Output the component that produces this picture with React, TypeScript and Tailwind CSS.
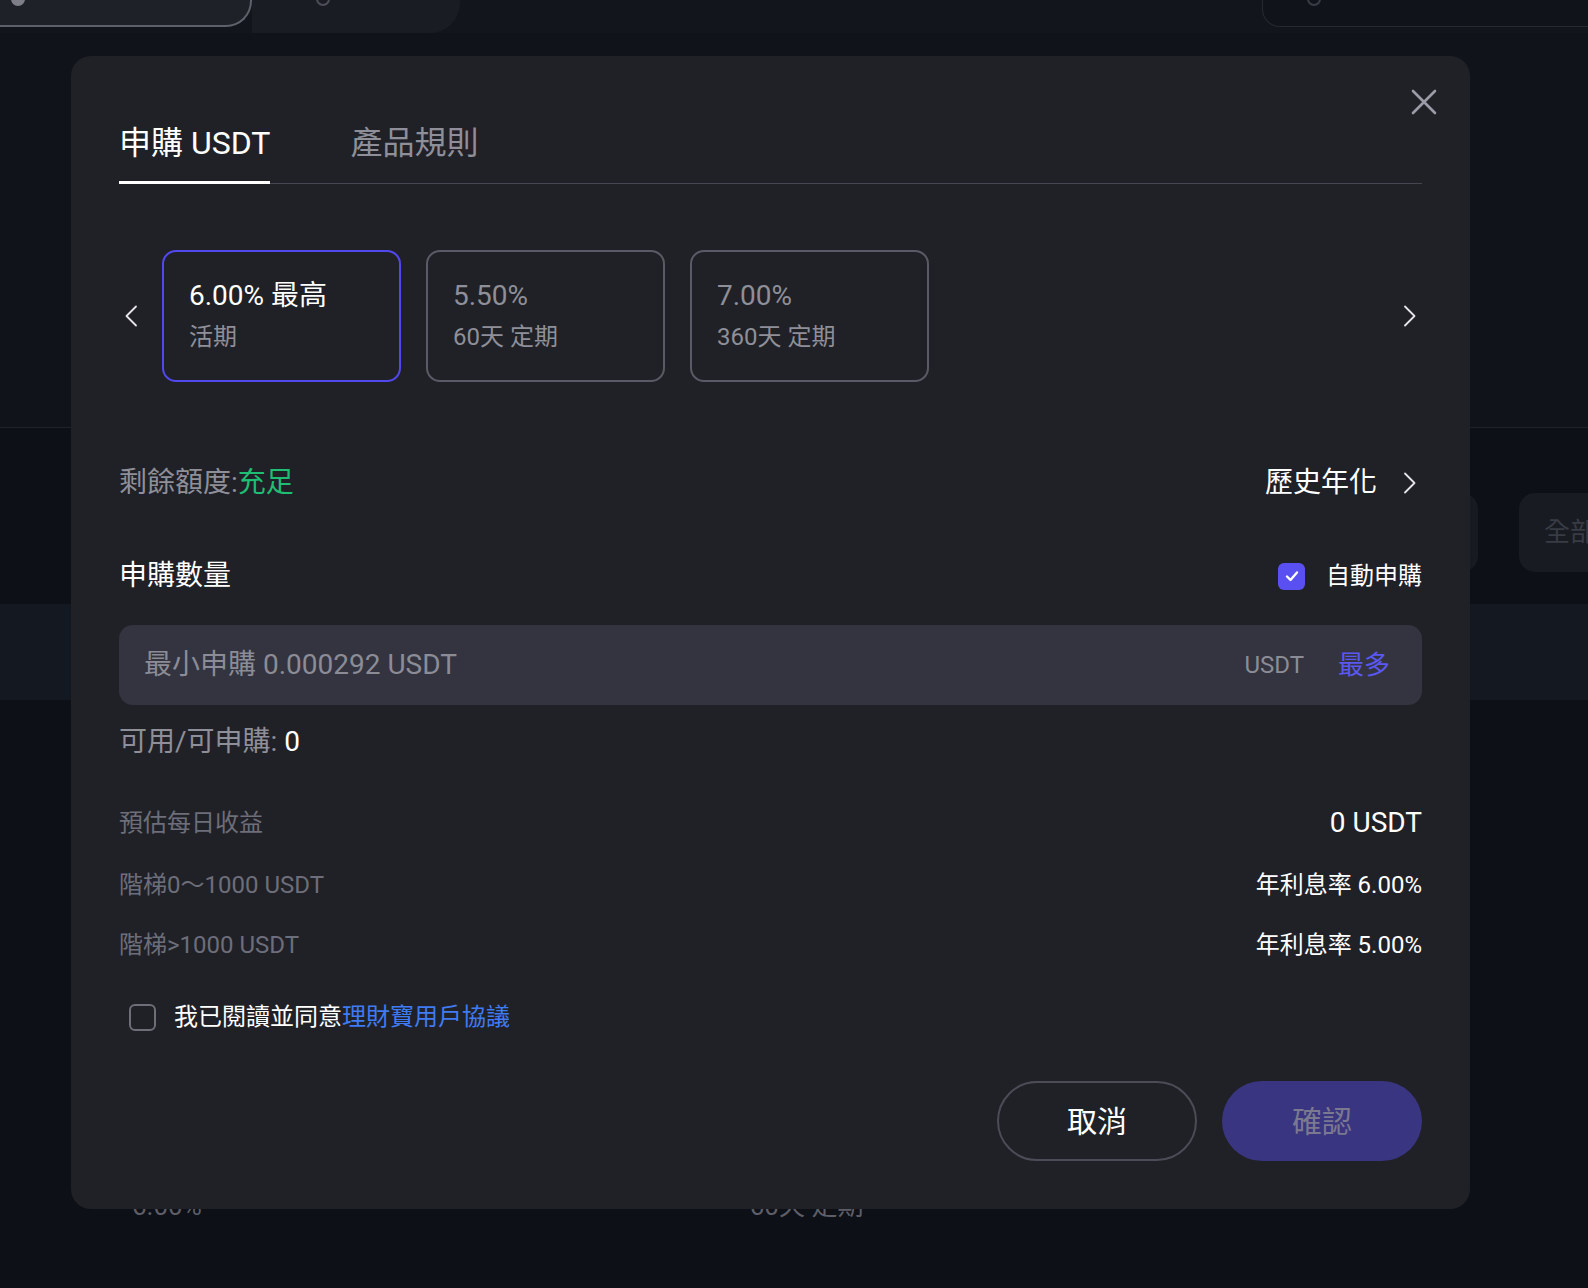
import { useState } from "react"

const FONT = "font-['Roboto','Noto_Sans_CJK_TC',sans-serif]"

/**
 * Savings products offered in the subscribe dialog.
 */
const PRODUCTS = [
  { id: "flexible", rate: "6.00%", tag: "最高", term: "活期" },
  { id: "fixed-60", rate: "5.50%", term: "60天 定期" },
  { id: "fixed-360", rate: "7.00%", term: "360天 定期" },
]

/**
 * Interest tiers shown under the estimate.
 */
const TIERS = [
  { label: "階梯0～1000 USDT", value: "年利息率 6.00%" },
  { label: "階梯>1000 USDT", value: "年利息率 5.00%" },
]

function ChevronLeft() {
  return (
    <svg width="14" height="22" viewBox="0 0 14 22" fill="none">
      <path d="M12 1.5 2.5 11l9.5 9.5" stroke="#e6e6ea" strokeWidth="1.8" strokeLinecap="round" strokeLinejoin="round" />
    </svg>
  )
}

function ChevronRight() {
  return (
    <svg width="14" height="22" viewBox="0 0 14 22" fill="none">
      <path d="M2 1.5 11.5 11 2 20.5" stroke="#e6e6ea" strokeWidth="1.8" strokeLinecap="round" strokeLinejoin="round" />
    </svg>
  )
}

function CloseIcon() {
  return (
    <svg width="26" height="26" viewBox="0 0 26 26" fill="none">
      <path d="M2 2 24 24M24 2 2 24" stroke="#9c9ca6" strokeWidth="2.6" strokeLinecap="round" />
    </svg>
  )
}

function CheckMark() {
  return (
    <svg width="16" height="16" viewBox="0 0 16 16" fill="none">
      <path d="M3 8.5 6.5 12 13 4.5" stroke="#fff" strokeWidth="2.4" strokeLinecap="round" strokeLinejoin="round" />
    </svg>
  )
}

/**
 * Dimmed page that sits behind the dialog.
 */
function BackgroundPage() {
  return (
    <div className="flex h-full flex-col bg-[#0d1016]">
      {/* Top bar with pill tabs */}
      <div className="flex h-[33px] items-start bg-[#12151c]">
        <div className="relative h-[27px] w-[252px] overflow-hidden rounded-br-[26px] border-b-2 border-r-2 border-[#5e606a] bg-[#1f2129]">
          <div className="ml-[11px] mt-[-8px] h-[14px] w-[14px] rounded-full bg-[#7d7e88]" />
        </div>
        <div className="h-[33px] w-[208px] overflow-hidden rounded-br-[30px] bg-[#1a1c23]">
          <div className="ml-[64px] mt-[-8px] h-[14px] w-[14px] rounded-full border-2 border-[#4c4d57]" />
        </div>
        <div className="flex-1" />
        <div className="h-[27px] w-[326px] overflow-hidden rounded-bl-[18px] border-b border-l border-[#262932] bg-[#10141a]">
          <div className="ml-[44px] mt-[-8px] h-[14px] w-[14px] rounded-full border-2 border-[#3a3c45]" />
        </div>
      </div>

      <div className="h-[394px] bg-[#10131a]" />
      <div className="h-px bg-[#1f222a]" />

      {/* Filter row, runs past the right edge of the window */}
      <div className="mt-[65px] flex h-[79px] justify-end">
        <div className="h-full w-[60px] rounded-[16px] bg-[#171a21]" />
        <div className="ml-[41px] flex h-full w-[69px] items-center overflow-hidden rounded-l-[16px] bg-[#181b22] pl-[25px] text-[26px] text-[#393b45]">
          <span className="whitespace-nowrap">全部</span>
        </div>
      </div>

      <div className="mt-[32px] h-[96px] bg-[#141820]" />

      {/* Product list row, mostly hidden by the dialog */}
      <div className="mt-[490px] flex text-[26px] leading-[32px] text-[#5d5e68]">
        <span className="ml-[132px]">6.00%</span>
        <span className="ml-[548px]">60天 定期</span>
      </div>
    </div>
  )
}

/**
 * Subscribe dialog with product picker, amount input and agreement.
 */
function SubscribeModal() {
  const [selected, setSelected] = useState("flexible")
  const [autoSubscribe, setAutoSubscribe] = useState(true)
  const [agreed, setAgreed] = useState(false)

  return (
    <div className="absolute inset-0">
      <div className="relative ml-[71px] mt-[56px] w-[1399px] rounded-[20px] bg-[#202127] px-12 pb-12 pt-[67px]">
        {/* Close button */}
        <button className="absolute right-[33px] top-[33px]" aria-label="Close">
          <CloseIcon />
        </button>

        {/* Tabs */}
        <div className="flex gap-[80px] border-b border-[#45464f] text-[32px] leading-[40px]">
          <div className="-mb-px border-b-[3px] border-white pb-[18px] text-white">申購 USDT</div>
          <div className="pb-[18px] text-[#8e8f99]">產品規則</div>
        </div>

        {/* Product picker */}
        <div className="mt-[66px] flex items-center">
          <button className="w-[43px] pl-[5px]">
            <ChevronLeft />
          </button>
          <div className="flex gap-[25px]">
            {PRODUCTS.map((p) => {
              const active = p.id === selected
              return (
                <button
                  key={p.id}
                  onClick={() => setSelected(p.id)}
                  className={
                    active
                      ? "flex h-[132px] w-[239px] flex-col justify-start rounded-[14px] border-2 border-[#5148ee] px-[25px] pt-[26px] text-left"
                      : "flex h-[132px] w-[239px] flex-col justify-start rounded-[14px] border-2 border-[#595a65] px-[25px] pt-[26px] text-left"
                  }
                >
                  <div className={active ? "text-[28px] leading-[36px] text-white" : "text-[28px] leading-[36px] text-[#8e8f99]"}>
                    {p.rate}
                    {p.tag && <span> {p.tag}</span>}
                  </div>
                  <div className="mt-[7px] text-[24px] leading-[32px] text-[#8e8f99]">{p.term}</div>
                </button>
              )
            })}
          </div>
          <div className="flex-1" />
          <button className="mr-[5px]">
            <ChevronRight />
          </button>
        </div>

        {/* Quota and history */}
        <div className="mt-[81px] flex items-center justify-between text-[28px] leading-[40px]">
          <div className="text-[#8e8f99]">
            剩餘額度:<span className="text-[#1fbf73]">充足</span>
          </div>
          <button className="flex items-center gap-[26px] text-white">
            歷史年化
            <span className="mr-[5px]">
              <ChevronRight />
            </span>
          </button>
        </div>

        {/* Amount header */}
        <div className="mt-[53px] flex items-center justify-between">
          <div className="text-[28px] leading-[40px] text-white">申購數量</div>
          <label className="flex items-center gap-[21px] text-[24px] leading-[40px] text-white">
            <button
              onClick={() => setAutoSubscribe(!autoSubscribe)}
              className={
                autoSubscribe
                  ? "flex h-[27px] w-[27px] items-center justify-center rounded-[6px] bg-[#5a50f2]"
                  : "h-[27px] w-[27px] rounded-[6px] border-2 border-[#6d6e78]"
              }
            >
              {autoSubscribe && <CheckMark />}
            </button>
            自動申購
          </label>
        </div>

        {/* Amount input */}
        <div className="mt-[29px] flex h-[80px] items-center rounded-[14px] bg-[#33343f] pl-[25px] pr-[32px]">
          <input
            className="min-w-0 flex-1 bg-transparent text-[28px] text-white outline-none placeholder:text-[#8b8c96]"
            placeholder="最小申購 0.000292 USDT"
          />
          <span className="text-[24px] text-[#8b8c96]">USDT</span>
          <button className="ml-[34px] text-[26px] text-[#5b57f2]">最多</button>
        </div>

        <div className="mt-[17px] text-[28px] leading-[40px] text-[#8e8f99]">
          可用/可申購: <span className="text-white">0</span>
        </div>

        {/* Estimate */}
        <div className="mt-[41px] flex items-center justify-between leading-[40px]">
          <span className="text-[24px] text-[#6d6e79]">預估每日收益</span>
          <span className="text-[28px] text-white">0 USDT</span>
        </div>
        <div className="mt-[22px] flex flex-col gap-[20px]">
          {TIERS.map((t) => (
            <div key={t.label} className="flex items-center justify-between text-[24px] leading-[40px]">
              <span className="text-[#6d6e79]">{t.label}</span>
              <span className="text-white">{t.value}</span>
            </div>
          ))}
        </div>

        {/* Agreement */}
        <div className="mt-[32px] flex items-center text-[24px] leading-[40px]">
          <button
            onClick={() => setAgreed(!agreed)}
            className="ml-[10px] flex h-[27px] w-[27px] items-center justify-center rounded-[6px] border-2 border-[#6d6e78]"
          >
            {agreed && <CheckMark />}
          </button>
          <span className="ml-[18px] text-white">
            我已閱讀並同意<span className="text-[#3f7bf2]">理財寶用戶協議</span>
          </span>
        </div>

        {/* Actions */}
        <div className="mt-[44px] flex justify-end gap-[25px] text-[30px]">
          <button className="h-[80px] w-[200px] rounded-full border-2 border-[#4b4c56] text-white">取消</button>
          <button className="h-[80px] w-[200px] rounded-full bg-[#3a3580] text-[#7b7990]">確認</button>
        </div>
      </div>
    </div>
  )
}

export default function App() {
  return (
    <div className={`relative h-[1288px] w-full overflow-hidden ${FONT}`}>
      <BackgroundPage />
      <SubscribeModal />
    </div>
  )
}
